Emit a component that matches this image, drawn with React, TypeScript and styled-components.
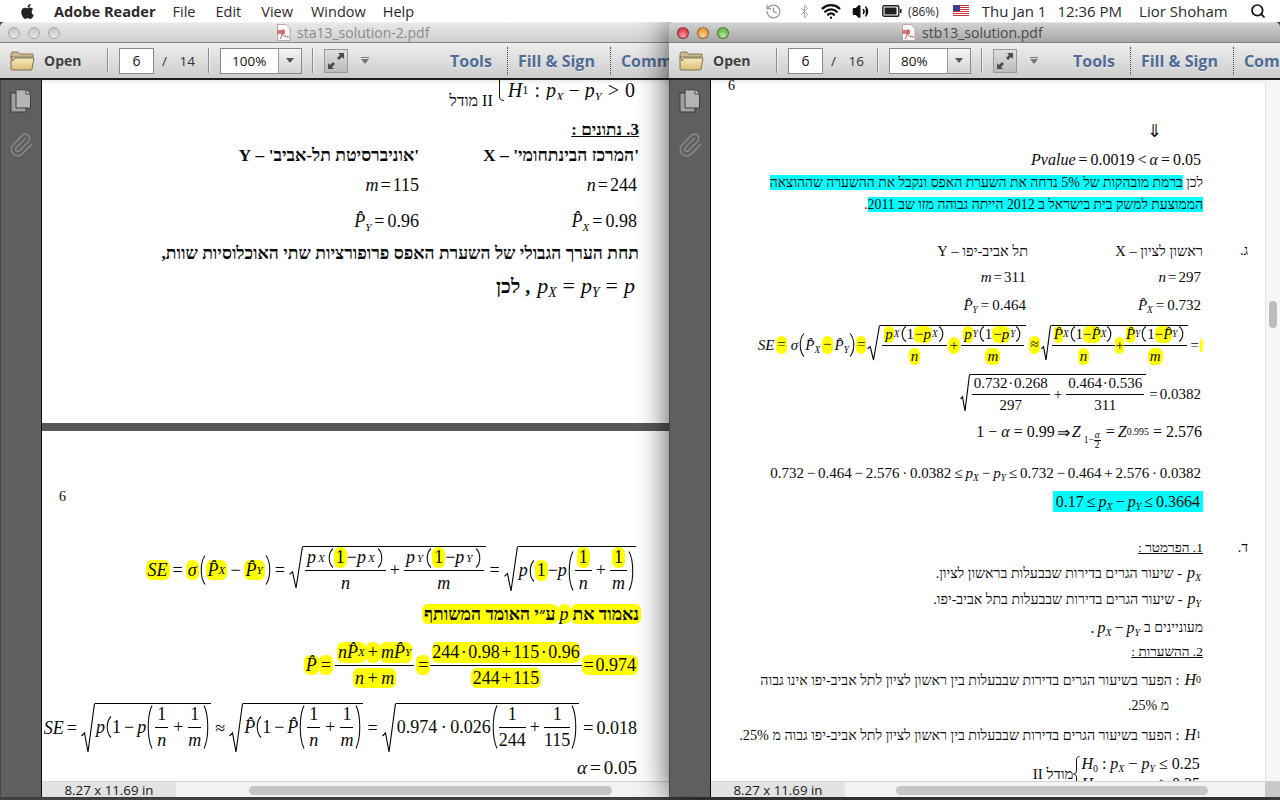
import React from 'react';
import styled, { createGlobalStyle } from 'styled-components';
import { FaApple } from 'react-icons/fa';
import { History, Bluetooth, Wifi, Volume2, Search, Paperclip } from 'lucide-react';

const Global = createGlobalStyle`
  html, body { margin: 0; padding: 0; height: 100%; overflow: hidden; background: #444; }
  #root { width: 1280px; height: 800px; }
`;

const Desktop = styled.div`
  position: relative; width: 1280px; height: 800px; overflow: hidden; background: #4a4a4a;
`;
const MenuBar = styled.header`
  position: relative; z-index: 5; height: 22px; background: #fff; display: flex; align-items: center;
  font: 14.5px "Open Sans", sans-serif; color: #222; white-space: nowrap;
`;
const MenuSlot = styled.span<{ $ml: number; $bold?: boolean; $small?: boolean; $big?: boolean; $c?: string }>`
  display: inline-flex; align-items: center; margin-left: ${p => p.$ml}px;
  font-weight: ${p => p.$bold ? 700 : 400};
  font-size: ${p => p.$small ? 12 : p.$bold ? 14.6 : p.$big ? 15 : 14.5}px;
  color: ${p => p.$c || '#2a2a2a'};
`;

const Win = styled.section<{ $x: number; $w: number; $active?: boolean }>`
  position: absolute; left: ${p => p.$x}px; top: 22px; width: ${p => p.$w}px; height: 775px;
  display: flex; flex-direction: column; overflow: hidden; border-radius: 5px 5px 0 0;
  z-index: ${p => p.$active ? 2 : 1};
  box-shadow: ${p => p.$active ? '0 0 32px rgba(0,0,0,.72)' : '0 0 6px rgba(0,0,0,.4)'};
`;
const TitleBar = styled.div<{ $active?: boolean }>`
  height: 21px; flex: none; display: flex; align-items: center; padding-left: 8px; position: relative;
  background: ${p => p.$active ? 'linear-gradient(#d2d2d2,#a6a6a6)' : 'linear-gradient(#e8e8e8,#d0d0d0)'};
  border-top: 1px solid ${p => p.$active ? '#e4e4e4' : '#f2f2f2'}; box-sizing: border-box;
  border-bottom: 1px solid #858585;
`;
const Lights = styled.div`display: flex; gap: 8px;`;
const Light = styled.span<{ $c?: string }>`
  width: 12px; height: 12px; border-radius: 50%;
  background: ${p => p.$c ? `radial-gradient(circle at 50% 75%, #fff8, transparent 60%), ${p.$c}` : 'linear-gradient(#c4c4c4,#e8e8e8)'};
  border: 1px solid ${p => p.$c ? '#0006' : '#a8a8a8'}; box-sizing: border-box;
`;
const TitleText = styled.div<{ $ml: number; $active?: boolean }>`
  margin-left: ${p => p.$ml}px; display: flex; align-items: center; gap: 6px;
  font: 14px "Open Sans", sans-serif; color: ${p => p.$active ? '#4a4a4a' : '#8a8a8a'};
`;
const ToolBar = styled.div`
  height: 37px; flex: none; display: flex; align-items: center; padding-left: 10px; box-sizing: border-box;
  background: linear-gradient(#eeeeee,#cdcdcd); border-bottom: 2px solid #1c1c1c; white-space: nowrap; overflow: hidden;
  font: 14px "Open Sans", sans-serif;
`;
const OpenLabel = styled.span`
  font-weight: 700; color: #3f3f3f; margin-left: 9px; width: 39px; flex: none; text-shadow: 0 1px 0 #fff6; font-size: 14px;
`;
const Sep = styled.span<{ $ml: number }>`
  width: 1px; height: 25px; background: #8d8d8d; box-shadow: 1px 0 0 #fff9; margin-left: ${p => p.$ml}px; flex: none;
`;
const PageBox = styled.span`
  width: 35px; height: 26px; margin-left: 11px; flex: none; background: #fff; border: 1px solid #8a8a8a; box-sizing: border-box;
  display: flex; align-items: center; justify-content: center; color: #111;
`;
const OfText = styled.span`
  width: 33px; margin-left: 8px; flex: none; color: #333; display: flex; justify-content: space-between; font-size: 13.5px;
`;
const ZoomBox = styled.span`
  width: 82px; height: 26px; margin-left: 11px; flex: none; background: #fff; border: 1px solid #8a8a8a; box-sizing: border-box; display: flex; color: #111;
`;
const ZoomValue = styled.span`flex: 1; display: flex; align-items: center; padding-left: 11px; font-size: 13.5px;`;
const ZoomArrow = styled.span`
  width: 22px; flex: none; border-left: 1px solid #9a9a9a; background: linear-gradient(#f4f4f4,#d4d4d4); display: flex; align-items: center; justify-content: center;
  &::after { content: ""; border: 4px solid transparent; border-top: 5px solid #555; border-bottom: 0; }
`;
const FullBtn = styled.span`
  width: 24px; height: 24px; margin-left: 11px; flex: none; border: 1px solid #9a9a9a; box-sizing: border-box;
  background: linear-gradient(#dedede,#bcbcbc); display: flex; align-items: center; justify-content: center;
`;
const MoreBtn = styled.span`
  margin-left: 12px; width: 9px; flex: none; display: flex; flex-direction: column; align-items: center; gap: 1px;
  &::before { content: ""; width: 8px; height: 1px; background: #777; }
  &::after { content: ""; border: 4px solid transparent; border-top: 5px solid #777; border-bottom: 0; }
`;
const ToolLink = styled.span<{ $ml: number }>`
  margin-left: ${p => p.$ml}px; font-weight: 700; font-size: 16px; color: #4f6c96; text-shadow: 0 1px 0 #fff8; flex: none;
`;
const DotSep = styled.span<{ $ml: number }>`
  margin-left: ${p => p.$ml}px; height: 28px; border-left: 1px dotted #444; flex: none;
`;

const WinBody = styled.div`flex: 1; display: flex; min-height: 0;`;
const Side = styled.aside`
  width: 42px; flex: none; background: #5f5f5f; border-right: 1px solid #0c0c0c; border-left: 1px solid #474747; box-sizing: border-box;
  display: flex; flex-direction: column; align-items: center; padding-top: 9px; gap: 19px; color: #858585;
`;
const Main = styled.div`flex: 1; display: flex; flex-direction: column; min-width: 0;`;
const ViewRow = styled.div`flex: 1; display: flex; min-height: 0;`;
const Doc = styled.div`flex: 1; min-width: 0; overflow: hidden; background: #585858;`;
const VScroll = styled.div<{ $thumb?: boolean }>`
  width: 15px; flex: none; background: #f6f6f6; border-left: 1px solid #e4e4e4; box-sizing: border-box; padding: 221px 0 0 3px;
  ${p => p.$thumb ? `&::after { content: ""; display: block; width: 8px; height: 27px; border-radius: 4px; background: #bdbdbd; }` : ''}
`;
const Status = styled.footer`
  height: 15px; flex: none; display: flex; background: #f3f3f3; border-top: 1px solid #d2d2d2; box-sizing: content-box; align-items: stretch;
`;
const Size = styled.span`
  width: 134px; background: #e2e2e2; font: 13.3px "Open Sans", sans-serif; color: #1a1a1a; display: flex; align-items: center; justify-content: center;
`;
const HThumb = styled.span<{ $ml: number; $w: number }>`
  margin: 4px 0 2px ${p => p.$ml}px; width: ${p => p.$w}px; border-radius: 5px; background: #c6c6c6;
`;
const Corner = styled.span`margin-left: auto; width: 15px; background: #c9c9c9;`;

const Page = styled.div<{ $h: number; $pr: number }>`
  height: ${p => p.$h}px; background: #fff; padding-right: ${p => p.$pr}px; overflow: hidden; display: flex; flex-direction: column;
  font-family: "Liberation Serif", serif; color: #0a0a0a; box-sizing: border-box;
`;
const TopFade = styled(Page)`background: linear-gradient(#ececec,#fff 5px);`;
const PageGap = styled.div`height: 8px;`;
const Line = styled.div<{ $h: number; $mt?: number; $fs?: number; $ws?: number; $out?: number }>`
  flex: none; height: ${p => p.$h}px; margin-top: ${p => p.$mt || 0}px; margin-right: ${p => p.$out || 0}px; display: flex; justify-content: flex-end; align-items: center;
  font-size: ${p => p.$fs || 18}px; white-space: nowrap; ${p => p.$ws ? `word-spacing: ${p.$ws}px;` : ''}
`;
const PageNum = styled(Line)`justify-content: flex-start; padding-left: 17px; font-size: 14px;`;
const Cell = styled.span<{ $w?: number }>`
  display: inline-flex; align-items: center; justify-content: flex-end; ${p => p.$w ? `width: ${p.$w}px;` : ''}
`;
const Marker = styled.span`
  width: 45px; margin-right: -45px; text-align: right; font-size: 14px; flex: none;
`;
const DArrow = styled.span`margin-right: 41px; font-size: 18px;`;
const He = styled.span<{ $b?: boolean; $fs?: number; $u?: boolean; $ml?: number; $mr?: number }>`
  font-family: "Liberation Serif", serif; font-size: ${p => p.$fs || 17.5}px; font-weight: ${p => p.$b ? 700 : 400};
  ${p => p.$u ? 'text-decoration: underline;' : ''} margin-left: ${p => p.$ml || 0}px; margin-right: ${p => p.$mr || 0}px; word-spacing: 0;
`;
const V = styled.i``;
const Sub = styled.sub<{ $n?: boolean }>`font-size: .62em; vertical-align: -.32em; line-height: 0; font-style: ${p => p.$n ? 'normal' : 'italic'};`;
const Op = styled.span<{ $m?: number }>`margin: 0 ${p => p.$m ?? 3}px;`;
const Hl = styled.span<{ $p?: number }>`
  background: #ffff00; border-radius: 6px; padding: 0 ${p => p.$p ?? 2}px; display: inline-flex; align-items: center; line-height: 1.15;
`;
const Sliver = styled.span`width: 3px; height: 13px; background: #ffff00; border-radius: 0 3px 3px 0; margin-left: -1px;`;
const Cy = styled.span`background: #00ffff; display: inline-block; line-height: 15px; height: 15px;`;
const CyBox = styled.span`background: #00ffff; display: inline-flex; align-items: center; height: 21px; padding: 0 3px;`;
const FracWrap = styled.span<{ $m?: number }>`
  display: inline-flex; flex-direction: column; align-items: center; line-height: 1.15; margin: 0 ${p => p.$m ?? 1}px;
`;
const Num = styled.span<{ $g?: number }>`
  align-self: stretch; display: flex; justify-content: center; align-items: center; padding: 0 2px ${p => p.$g ?? 2}px; border-bottom: 1px solid #000;
`;
const Den = styled.span<{ $g?: number }>`display: flex; justify-content: center; padding-top: ${p => p.$g ?? 2}px;`;
const RootWrap = styled.span`display: inline-flex; align-items: flex-start; margin: 0 1px;`;
const RootBody = styled.span`display: inline-flex; align-items: center; border-top: 1px solid #000; padding: 0 1px;`;
const Svgp = styled.svg`display: block; flex: none; overflow: visible;`;
const Tiny = styled.span`
  display: inline-flex; align-items: center; font-size: 9.5px; margin-top: 17px; margin-right: 2px; margin-left: 3px; line-height: 1;
`;
const TinyFrac = styled.span`display: inline-flex; flex-direction: column; align-items: center; line-height: 9px;`;
const TinyNum = styled.i`border-bottom: 1px solid #000; padding: 0 1px;`;

const Rad = ({ h, w = 13 }: { h: number; w?: number }) => (
  <Svgp width={w} height={h} viewBox={`0 0 ${w} ${h}`}>
    <path d={`M.5 ${h * .66} L${w * .25} ${h * .6} L${w * .5} ${h - 1} L${w - .5} .5`} fill="none" stroke="#000" strokeWidth="1.1" />
  </Svgp>
);
const Sqrt = ({ h, w, children }: { h: number; w?: number; children: React.ReactNode }) => (
  <RootWrap><Rad h={h} w={w} /><RootBody>{children}</RootBody></RootWrap>
);
const Par = ({ h, r }: { h: number; r?: boolean }) => (
  <Svgp width={7} height={h} viewBox={`0 0 7 ${h}`}>
    <path d={r ? `M1 .5 C6 ${h * .25} 6 ${h * .75} 1 ${h - .5}` : `M6 .5 C1 ${h * .25} 1 ${h * .75} 6 ${h - .5}`} fill="none" stroke="#111" strokeWidth="1.1" />
  </Svgp>
);
const Frac = ({ n, d, m, g }: { n: React.ReactNode; d: React.ReactNode; m?: number; g?: number }) => (
  <FracWrap $m={m}><Num $g={g}>{n}</Num><Den $g={g}>{d}</Den></FracWrap>
);
const PX = () => <V>p<Sub>X</Sub></V>;
const PY = () => <V>p<Sub>Y</Sub></V>;
const HX = () => <V>P̂<Sub>X</Sub></V>;
const HY = () => <V>P̂<Sub>Y</Sub></V>;

const FolderSvg = styled.svg`flex: none;`;
const Folder = () => (
  <FolderSvg width="25" height="20" viewBox="0 0 25 20">
    <defs><linearGradient id="fold" x1="0" y1="0" x2="0" y2="1"><stop offset="0" stopColor="#fdf2c8" /><stop offset="1" stopColor="#d9bd78" /></linearGradient></defs>
    <path d="M1 3 L2 1 H8 L10 3 H23 V6 H1 Z" fill="#c9b98c" stroke="#776a45" strokeWidth=".8" />
    <path d="M1 5 L1 18 Q1 19 2 19 H21 Q22 19 22 18 L24 7 H5 L3 10 Z" fill="url(#fold)" stroke="#776a45" strokeWidth=".9" />
  </FolderSvg>
);
const PdfIcon = () => (
  <svg width="15" height="17" viewBox="0 0 15 17">
    <path d="M1.5 .5 H10 L14 4.5 V16.5 H1.5 Z" fill="#fbfbfb" stroke="#b8a8a8" />
    <path d="M1 6 H9 V10 H1 Z" fill="#d97a7a" />
    <path d="M4 15 C6 12 7 8 7 5 M6 10 C8 12 10 13 13 13" stroke="#d05050" fill="none" />
  </svg>
);
const Arrows = () => (
  <svg width="18" height="18" viewBox="0 0 18 18" fill="#4c4c4c">
    <path d="M11 1 H17 V7 L15 5 L12 8 L10 6 L13 3 Z" />
    <path d="M7 17 H1 V11 L3 13 L6 10 L8 12 L5 15 Z" />
  </svg>
);
const Pages = () => (
  <svg width="22" height="24" viewBox="0 0 22 24">
    <rect x="1" y="4" width="15" height="19" fill="#a0a0a0" stroke="#3f3f3f" />
    <path d="M6 .8 H16 L20.5 5 V19 H6 Z" fill="#b4b4b4" stroke="#3f3f3f" />
    <path d="M16 1 V5 H20" fill="#e0e0e0" stroke="#3f3f3f" />
  </svg>
);
const Battery = () => (
  <svg width="20" height="12" viewBox="0 0 20 12">
    <rect x=".8" y=".8" width="16" height="10.4" rx="1.5" fill="none" stroke="#222" strokeWidth="1.4" />
    <rect x="2.5" y="2.5" width="12" height="7" fill="#222" />
    <rect x="18" y="4" width="1.6" height="4" fill="#222" />
  </svg>
);
const Flag = () => (
  <svg width="16" height="12" viewBox="0 0 16 12">
    <rect width="16" height="12" fill="#fff" />
    {[0, 2, 4, 6, 8, 10].map(y => <rect key={y} y={y} width="16" height="1" fill="#c8323c" />)}
    <rect width="7" height="6" fill="#3c3f8c" />
  </svg>
);
const Brace = ({ h }: { h: number }) => (
  <Svgp width={7} height={h} viewBox={`0 0 7 ${h}`}>
    <path d={`M6.5 .5 C3 1 3.5 3 3.5 6 V${h / 2 - 4} C3.5 ${h / 2 - 1} 2 ${h / 2} .5 ${h / 2} C2 ${h / 2} 3.5 ${h / 2 + 1} 3.5 ${h / 2 + 4} V${h - 6} C3.5 ${h - 3} 3 ${h - 1} 6.5 ${h - .5}`} fill="none" stroke="#111" strokeWidth="1" />
  </Svgp>
);
const BraceEnd = () => (
  <Svgp width={7} height={21} viewBox="0 0 7 21">
    <path d="M1.5 0 V16 Q1.5 20.5 6 20.5" fill="none" stroke="#111" strokeWidth="1" />
  </Svgp>
);

const BraceRow = styled.span`display: inline-flex; align-items: flex-start; align-self: flex-start; margin-left: 5px; margin-right: 2px;`;
const BraceLines = styled.span`display: inline-flex; flex-direction: column; align-items: flex-start; line-height: 20px; margin-left: 1px;`;
const ClipTop = styled.span`display: inline-flex; align-items: center; height: 20px; overflow: hidden; margin-left: 3px; font-size: 20px;`;
const Stack = styled.span`display: inline-flex; align-items: flex-end; align-self: stretch; padding-bottom: 1px;`;

const TitleGroup = ({ active, name, ml }: { active?: boolean; name: string; ml: number }) => (
  <TitleBar $active={active}>
    <Lights>
      <Light $c={active ? '#e0444c' : undefined} />
      <Light $c={active ? '#e9a13d' : undefined} />
      <Light $c={active ? '#6fc04f' : undefined} />
    </Lights>
    <TitleText $ml={ml} $active={active}><PdfIcon />{name}</TitleText>
  </TitleBar>
);

const Tools = ({ total, zoom, tl }: { total: string; zoom: string; tl: number }) => (
  <ToolBar>
    <Folder />
    <OpenLabel>Open</OpenLabel>
    <Sep $ml={24} />
    <PageBox>6</PageBox>
    <OfText><span>/</span><span>{total}</span></OfText>
    <Sep $ml={13} />
    <ZoomBox><ZoomValue>{zoom}</ZoomValue><ZoomArrow /></ZoomBox>
    <Sep $ml={10} />
    <FullBtn><Arrows /></FullBtn>
    <MoreBtn />
    <ToolLink $ml={tl}>Tools</ToolLink>
    <DotSep $ml={15} />
    <ToolLink $ml={10}>Fill &amp; Sign</ToolLink>
    <DotSep $ml={15} />
    <ToolLink $ml={10}>Comment</ToolLink>
  </ToolBar>
);

const Bottom = ({ ml, w, corner }: { ml: number; w: number; corner?: boolean }) => (
  <Status>
    <Size>8.27 x 11.69 in</Size>
    <HThumb $ml={ml} $w={w} />
    {corner && <Corner />}
  </Status>
);

const Hr = ({ t }: { t: string }) => <He dir="rtl" $fs={14.2} $mr={5}>{t}</He>;

export default function App() {
  return (
    <Desktop>
      <Global />
      <MenuBar>
        <MenuSlot $ml={19} $c="#222"><FaApple size={17} /></MenuSlot>
        <MenuSlot $ml={18} $bold>Adobe Reader</MenuSlot>
        <MenuSlot $ml={17}>File</MenuSlot>
        <MenuSlot $ml={20}>Edit</MenuSlot>
        <MenuSlot $ml={20}>View</MenuSlot>
        <MenuSlot $ml={18}>Window</MenuSlot>
        <MenuSlot $ml={17}>Help</MenuSlot>
        <MenuSlot $ml={351} $c="#999"><History size={17} strokeWidth={1.8} /></MenuSlot>
        <MenuSlot $ml={15} $c="#aaa"><Bluetooth size={15} strokeWidth={1.6} /></MenuSlot>
        <MenuSlot $ml={9} $c="#111"><Wifi size={20} strokeWidth={2.8} /></MenuSlot>
        <MenuSlot $ml={11} $c="#111"><Volume2 size={17} fill="#111" strokeWidth={2} /></MenuSlot>
        <MenuSlot $ml={13}><Battery /></MenuSlot>
        <MenuSlot $ml={6} $small>(86%)</MenuSlot>
        <MenuSlot $ml={14}><Flag /></MenuSlot>
        <MenuSlot $ml={13} $big>Thu Jan 1</MenuSlot>
        <MenuSlot $ml={11} $big>12:36 PM</MenuSlot>
        <MenuSlot $ml={17} $big>Lior Shoham</MenuSlot>
        <MenuSlot $ml={22} $c="#111"><Search size={16} strokeWidth={2.6} /></MenuSlot>
      </MenuBar>

      <Win $x={0} $w={706}>
        <TitleGroup name="sta13_solution-2.pdf" ml={216} />
        <Tools total="14" zoom="100%" tl={81} />
        <WinBody>
          <Side><Pages /><Paperclip size={26} strokeWidth={1.5} /></Side>
          <Main>
            <ViewRow>
              <Doc>
                <TopFade $h={343} $pr={54}>
                  <Line $h={31}>
                    <Stack><He $fs={16}>מודל II</He></Stack>
                    <BraceRow>
                      <BraceEnd />
                      <ClipTop><V>H</V><Sub $n>1</Sub><Op $m={6}>:</Op><PX /><Op $m={5}>−</Op><PY /><Op $m={6}>&gt;</Op>0</ClipTop>
                    </BraceRow>
                  </Line>
                  <Line $h={20} $mt={9} $out={-2}><He dir="rtl" $b $u $fs={17}>3. נתונים :</He></Line>
                  <Line $h={20} $mt={5} $out={-2}>
                    <Cell><He dir="rtl" $b>'אוניברסיטת תל-אביב' – Y</He></Cell>
                    <Cell $w={220}><He dir="rtl" $b>'המרכז הבינתחומי' – X</He></Cell>
                  </Line>
                  <Line $h={20} $mt={10}>
                    <Cell><V>m</V><Op $m={2}>=</Op>115</Cell>
                    <Cell $w={218}><V>n</V><Op $m={2}>=</Op>244</Cell>
                  </Line>
                  <Line $h={30} $mt={11}>
                    <Cell><HY /><Op>=</Op>0.96</Cell>
                    <Cell $w={218}><HX /><Op>=</Op>0.98</Cell>
                  </Line>
                  <Line $h={20} $mt={7} $out={-2}><He dir="rtl" $b>תחת הערך הגבולי של השערת האפס פרופורציות שתי האוכלוסיות שוות,</He></Line>
                  <Line $h={24} $mt={11} $fs={22} $out={2}>
                    <He dir="rtl" $b $mr={7} $fs={20}>, לכן</He>
                    <PX /><Op $m={6}>=</Op><PY /><Op $m={6}>=</Op><V>p</V>
                  </Line>
                </TopFade>
                <PageGap />
                <Page $h={400} $pr={54}>
                  <PageNum $h={20} $mt={56}>6</PageNum>
                  <Line $h={50} $mt={38}>
                    <Hl><V>SE</V></Hl><Op>=</Op><Hl><V>σ</V></Hl><Par h={30} />
                    <Hl><V>P̂</V><Sub>X</Sub></Hl><Op>−</Op><Hl><V>P̂</V><Sub>Y</Sub></Hl><Par h={30} r /><Op>=</Op>
                    <Sqrt h={43} w={14}>
                      <Frac n={<><V>p</V><Hl><Sub>X</Sub></Hl><Par h={20} /><Hl>1</Hl>− <V>p</V><Hl><Sub>X</Sub></Hl><Par h={20} r /></>} d={<V>n</V>} />
                      <Op>+</Op>
                      <Frac n={<><V>p</V><Hl><Sub>Y</Sub></Hl><Par h={20} /><Hl>1</Hl>− <V>p</V><Hl><Sub>Y</Sub></Hl><Par h={20} r /></>} d={<V>m</V>} />
                    </Sqrt>
                    <Op>=</Op>
                    <Sqrt h={46} w={14}>
                      <V>p</V><Par h={22} /><Hl>1</Hl>− <V>p</V><Par h={40} />
                      <Frac n={<Hl>1</Hl>} d={<V>n</V>} /><Op>+</Op><Frac n={<Hl>1</Hl>} d={<V>m</V>} /><Par h={40} r />
                    </Sqrt>
                  </Line>
                  <Line $h={24} $mt={7} $out={-4}>
                    <Hl><He dir="rtl" $b>ע״י האומד המשותף</He></Hl>
                    <Hl><V>p</V></Hl>
                    <Hl><He dir="rtl" $b>נאמוד את</He></Hl>
                  </Line>
                  <Line $h={54} $mt={12} $ws={-3} $out={-1}>
                    <Hl><V>P̂</V></Hl><Hl>=</Hl>
                    <Frac m={2} n={<><Hl $p={1}><V>nP̂</V><Sub>X</Sub></Hl><Hl $p={2}>+</Hl><Hl $p={1}><V>mP̂</V><Sub>Y</Sub></Hl></>} d={<Hl><V>n</V>&thinsp;+&thinsp;<V>m</V></Hl>} />
                    <Hl>=</Hl>
                    <Frac m={0} n={<Hl $p={0}>244 · 0.98 + 115 · 0.96</Hl>} d={<Hl>244 + 115</Hl>} />
                    <Hl>= 0.974</Hl>
                  </Line>
                  <Line $h={56} $mt={8}>
                    <V>SE</V><Op>=</Op>
                    <Sqrt h={50} w={14}>
                      <V>p</V><Par h={22} />1<Op>−</Op><V>p</V><Par h={44} /><Frac m={2} n="1" d={<V>n</V>} /><Op>+</Op><Frac m={2} n="1" d={<V>m</V>} /><Par h={44} r />
                    </Sqrt>
                    <Op>≈</Op>
                    <Sqrt h={50} w={14}>
                      <V>P̂</V><Par h={22} />1<Op>−</Op><V>P̂</V><Par h={44} /><Frac m={2} n="1" d={<V>n</V>} /><Op>+</Op><Frac m={2} n="1" d={<V>m</V>} /><Par h={44} r />
                    </Sqrt>
                    <Op>=</Op>
                    <Sqrt h={50} w={14}>
                      <Cell>0.974&#8201;·&#8201;0.026</Cell><Par h={44} /><Frac n="1" d="244" /><Op>+</Op><Frac n="1" d="115" /><Par h={44} r />
                    </Sqrt>
                    <Op>=</Op>0.018
                  </Line>
                  <Line $h={24} $fs={19}><V>α</V><Op>=</Op>0.05</Line>
                </Page>
              </Doc>
              <VScroll />
            </ViewRow>
            <Bottom ml={73} w={363} />
          </Main>
        </WinBody>
      </Win>

      <Win $x={669} $w={611} $active>
        <TitleGroup active name="stb13_solution.pdf" ml={172} />
        <Tools total="16" zoom="80%" tl={35} />
        <WinBody>
          <Side><Pages /><Paperclip size={26} strokeWidth={1.5} /></Side>
          <Main>
            <ViewRow>
              <Doc>
                <TopFade $h={720} $pr={62}>
                  <PageNum $h={12} $fs={13}>6</PageNum>
                  <Line $h={20} $mt={29} $fs={16}><DArrow>⇓</DArrow></Line>
                  <Line $h={20} $mt={9} $fs={16} $out={2}><V>Pvalue</V><Op>=</Op>0.0019<Op>&lt;</Op><V>α</V><Op>=</Op>0.05</Line>
                  <Line $h={16} $mt={5}><He dir="rtl" $fs={13.9}>לכן <Cy>ברמת מובהקות של 5% נדחה את השערת האפס ונקבל את ההשערה שההוצאה</Cy></He></Line>
                  <Line $h={16} $mt={6}><He dir="rtl" $fs={13.9}><Cy>הממוצעת למשק בית בישראל ב 2012 הייתה גבוהה מזו שב 2011</Cy>.</He></Line>
                  <Line $h={20} $mt={28}>
                    <Cell><He dir="rtl" $fs={14.5}>תל אביב-יפו – Y</He></Cell>
                    <Cell $w={175}><He dir="rtl" $fs={14.5}>ראשון לציון – X</He></Cell>
                    <Marker>.ג</Marker>
                  </Line>
                  <Line $h={20} $mt={6} $fs={15} $out={2}>
                    <Cell><V>m</V><Op $m={2}>=</Op>311</Cell>
                    <Cell $w={175}><V>n</V><Op $m={2}>=</Op>297</Cell>
                  </Line>
                  <Line $h={24} $mt={6} $fs={15} $out={2}>
                    <Cell><HY /><Op>=</Op>0.464</Cell>
                    <Cell $w={175}><HX /><Op>=</Op>0.732</Cell>
                  </Line>
                  <Line $h={44} $mt={6} $fs={15}>
                    <V>SE</V><Op $m={1} /><Hl $p={1}>=</Hl><Op $m={2} /><V>σ</V><Par h={24} /><HX /><Op $m={1} /><Hl $p={1}>−</Hl><Op $m={1} /><HY /><Par h={24} r /><Hl $p={1}>=</Hl>
                    <Sqrt h={36}>
                      <Frac m={1} n={<><Hl $p={1}><V>p</V></Hl><Sub>X</Sub><Par h={16} />1<Hl $p={1}>−<V>p</V></Hl><Sub>X</Sub><Par h={16} r /></>} d={<Hl><V>n</V></Hl>} />
                      <Hl $p={2}>+</Hl>
                      <Frac m={1} n={<><Hl $p={1}><V>p</V></Hl><Sub>Y</Sub><Par h={16} />1<Hl $p={1}>−<V>p</V></Hl><Sub>Y</Sub><Par h={16} r /></>} d={<Hl><V>m</V></Hl>} />
                    </Sqrt>
                    <Op $m={1} /><Hl $p={1}>≈</Hl>
                    <Sqrt h={36} w={10}>
                      <Frac m={0} n={<><Hl $p={0}><V>P̂</V></Hl><Sub>X</Sub><Par h={16} />1<Hl $p={0}>−<V>P̂</V></Hl><Sub>X</Sub><Par h={16} r /></>} d={<Hl><V>n</V></Hl>} />
                      <Hl $p={0}>+</Hl>
                      <Frac m={0} n={<><Hl $p={0}><V>P̂</V></Hl><Sub>Y</Sub><Par h={16} />1<Hl $p={0}>−<V>P̂</V></Hl><Sub>Y</Sub><Par h={16} r /></>} d={<Hl><V>m</V></Hl>} />
                    </Sqrt>
                    <Op $m={2}>=</Op><Sliver />
                  </Line>
                  <Line $h={44} $mt={5} $fs={15} $ws={-3} $out={2}>
                    <Sqrt h={38} w={10}>
                      <Frac n="0.732 · 0.268" d="297" /><Op>+</Op><Frac n="0.464 · 0.536" d="311" />
                    </Sqrt>
                    <Op $m={2}>=</Op>0.0382
                  </Line>
                  <Line $h={26} $mt={3} $fs={16} $out={1}>
                    1<Op $m={4}>−</Op><V>α</V><Op $m={4}>=</Op>0.99<Op $m={2}>⇒</Op><V>Z</V>
                    <Tiny>1−<TinyFrac><TinyNum>α</TinyNum><span>2</span></TinyFrac></Tiny>
                    <Op>=</Op><V>Z</V><Sub $n>0.995</Sub><Op $m={4}>=</Op>2.576
                  </Line>
                  <Line $h={24} $mt={16} $fs={15} $ws={-1} $out={2}>
                    0.732 − 0.464 − 2.576 · 0.0382<Op>≤</Op><PX /><Op>−</Op><PY /><Op>≤</Op>0.732 − 0.464 + 2.576 · 0.0382
                  </Line>
                  <Line $h={21} $mt={6} $fs={16}>
                    <CyBox>0.17<Op>≤</Op><PX /><Op>−</Op><PY /><Op>≤</Op>0.3664</CyBox>
                  </Line>
                  <Line $h={20} $mt={26}><He dir="rtl" $fs={13.5} $u>1. הפרמטר :</He><Marker>.ד</Marker></Line>
                  <Line $h={22} $mt={4} $fs={16} $out={2}><Hr t="- שיעור הגרים בדירות שבבעלות בראשון לציון." /><PX /></Line>
                  <Line $h={22} $mt={4} $fs={16} $out={2}><Hr t="- שיעור הגרים בדירות שבבעלות בתל אביב-יפו." /><PY /></Line>
                  <Line $h={22} $mt={7} $fs={16}><Op>.</Op><PX /><Op>−</Op><PY /><He dir="rtl" $fs={14} $ml={4}>מעוניינים ב</He></Line>
                  <Line $h={20} $mt={3}><He dir="rtl" $fs={13.5} $u>2. ההשערות :</He></Line>
                  <Line $h={22} $mt={7} $fs={16} $out={2}><Hr t=": הפער בשיעור הגרים בדירות שבבעלות בין ראשון לציון לתל אביב-יפו אינו גבוה" /><V>H</V><Sub $n>0</Sub></Line>
                  <Line $h={20} $mt={5}><He dir="rtl" $fs={14} $mr={34}>מ 25%.</He></Line>
                  <Line $h={22} $mt={8} $fs={16} $out={2}><Hr t=": הפער בשיעור הגרים בדירות שבבעלות בין ראשון לציון לתל אביב-יפו גבוה מ 25%." /><V>H</V><Sub $n>1</Sub></Line>
                  <Line $h={36} $mt={10} $fs={16} $out={3}>
                    <He dir="rtl" $fs={15}>מודל II</He>
                    <Brace h={36} />
                    <BraceLines>
                      <span><V>H</V><Sub $n>0</Sub><Op $m={4}>:</Op><PX /><Op $m={4}>−</Op><PY /><Op $m={4}>≤</Op>0.25</span>
                      <span><V>H</V><Sub $n>1</Sub><Op $m={4}>:</Op><PX /><Op $m={4}>−</Op><PY /><Op $m={4}>&gt;</Op>0.25</span>
                    </BraceLines>
                  </Line>
                </TopFade>
              </Doc>
              <VScroll $thumb />
            </ViewRow>
            <Bottom ml={51} w={312} corner />
          </Main>
        </WinBody>
      </Win>
    </Desktop>
  );
}
